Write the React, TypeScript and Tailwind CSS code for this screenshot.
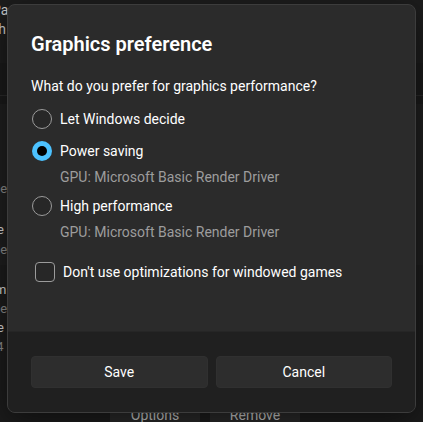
import React from "react";

const font = { fontFamily: '"Segoe UI", Roboto, "Noto Sans", sans-serif' };

function Radio({ checked }: { checked?: boolean }) {
  if (checked) {
    return (
      <span className="flex h-5 w-5 shrink-0 items-center justify-center rounded-full bg-[#4cc2ff]">
        <span className="h-[10px] w-[10px] rounded-full bg-black" />
      </span>
    );
  }
  return <span className="h-5 w-5 shrink-0 rounded-full border border-[#9b9b9b] bg-[#272727]" />;
}

function Option({ label, sub, checked }: { label: string; sub?: string; checked?: boolean }) {
  return (
    <div className="flex flex-col">
      <div className="flex h-5 items-center gap-[8px] pl-[1px]">
        <Radio checked={checked} />
        <span className="text-[14px] text-white">{label}</span>
      </div>
      {sub && <div className="mt-[6px] h-5 pl-[29px] text-[14px] leading-5 text-[#9d9d9d]">{sub}</div>}
    </div>
  );
}

export default function App() {
  return (
    <div className="relative h-[422px] w-[423px] overflow-hidden bg-[#1c1c1c]" style={font}>
      {/* page behind the dialog */}
      <div className="flex h-full flex-col text-[14px] text-[#d0d0d0]">
        <div className="flex h-[63px] flex-col bg-[#1d1d1d] pt-[1px]">
          <div className="h-[19px] leading-[19px] text-[#cfcfcf]">
            <span className="relative -left-[8px]">Pa</span>
          </div>
          <div className="h-[19px] leading-[19px] text-[#cfcfcf]">
            <span className="relative -left-[9px]">ch</span>
          </div>
        </div>
        <div className="h-[32px] bg-[#1a1a1a]" />
        <div className="h-[1px] bg-[#2a2a2a]" />
        <div className="h-[8px] bg-[#1a1a1a]" />
        <div className="flex h-[161px] flex-col bg-[#1f1f1f] pt-[75px] text-[13px] leading-[20px]">
          <span className="relative -left-[7px] text-[#8c8c8c]">de</span>
          <span className="relative -left-[3px] mt-[21px] text-[#d6d6d6]">e</span>
          <span className="relative -left-[7px] text-[#8c8c8c]">de</span>
        </div>
        <div className="flex flex-1 flex-col bg-[#1c1c1c] pt-[15px] text-[13px] leading-[19px]">
          <span className="relative -left-[5px] text-[#d6d6d6]">m</span>
          <span className="relative -left-[7px] text-[#8c8c8c]">de</span>
          <span className="relative -left-[3px] text-[#d6d6d6]">e</span>
          <span className="relative -left-[7px] text-[#8c8c8c]">l4</span>
          <div className="mt-auto flex h-[18px] gap-[10px] pl-[110px]">
            <div className="flex h-[32px] w-[90px] justify-center bg-[#2a2a2a] pt-[1px] text-[14px] leading-5 text-[#c8c8c8]">Options</div>
            <div className="flex h-[32px] w-[90px] justify-center bg-[#2a2a2a] pt-[1px] text-[14px] leading-5 text-[#c8c8c8]">Remove</div>
          </div>
        </div>
      </div>

      {/* dialog */}
      <div className="absolute left-[7px] top-[4px] flex h-[409px] w-[409px] flex-col overflow-hidden rounded-[8px] border border-[#3c3c3c] bg-[#2b2b2b] shadow-[0_8px_32px_rgba(0,0,0,0.5)]">
        <div className="flex flex-1 flex-col px-[23px] pt-[25px]">
          <h1 className="h-[28px] text-[20px] font-semibold leading-[28px] text-white">Graphics preference</h1>
          <p className="mt-[18px] h-5 text-[14px] leading-5 text-white">What do you prefer for graphics performance?</p>
          <div className="mt-[13px] flex flex-col gap-[12px]">
            <Option label="Let Windows decide" />
            <Option label="Power saving" sub="GPU: Microsoft Basic Render Driver" checked />
            <div className="-mt-[3px]">
              <Option label="High performance" sub="GPU: Microsoft Basic Render Driver" />
            </div>
          </div>
          <div className="mt-[20px] flex h-5 items-center gap-[8px] pl-[4px]">
            <span className="h-5 w-5 shrink-0 rounded-[4px] border border-[#9b9b9b] bg-[#272727]" />
            <span className="text-[14px] text-white">Don&apos;t use optimizations for windowed games</span>
          </div>
        </div>
        <div className="flex h-[81px] gap-[8px] border-t border-[#262626] bg-[#202020] px-[23px] pt-[24px]">
          <button className="h-[32px] flex-1 rounded-[4px] border border-[#303030] bg-[#2d2d2d] text-[14px] text-white">Save</button>
          <button className="h-[32px] flex-1 rounded-[4px] border border-[#303030] bg-[#2d2d2d] text-[14px] text-white">Cancel</button>
        </div>
      </div>
    </div>
  );
}
